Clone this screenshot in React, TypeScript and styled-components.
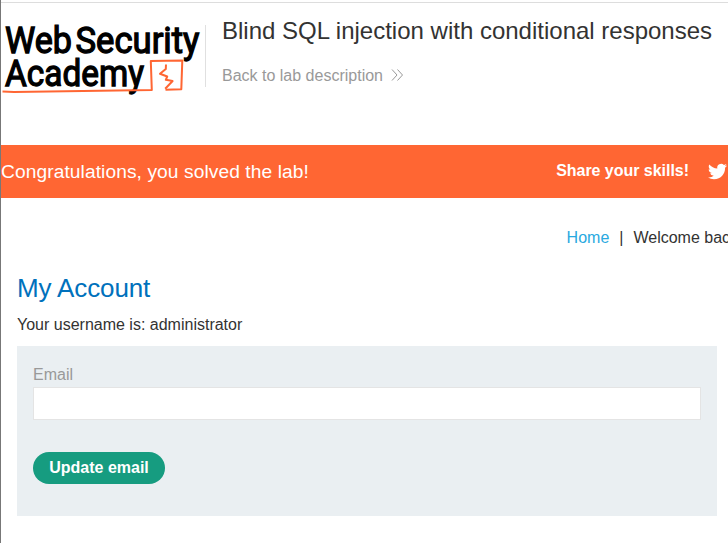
import React from "react";
import styled, { createGlobalStyle } from "styled-components";

const GlobalStyle = createGlobalStyle`
  *, *::before, *::after { box-sizing: border-box; }
  html, body { margin: 0; overflow: hidden; background: #fff; }
  body { font-family: "Liberation Sans", Arial, sans-serif; font-size: 16px; color: #333332; }
`;

const Page = styled.div`
  width: 728px;
  height: 543px;
  border-left: 1px solid #777;
  overflow: hidden;
`;

const Header = styled.header`
  display: flex;
  height: 145px;
  padding-top: 2px;
  background: linear-gradient(#ddd, #ddd) 0 2px / 100% 1px no-repeat;
`;

const Logo = styled.svg`
  display: block;
  flex: none;
  width: 204px;
  height: 100px;
  font-family: Roboto, sans-serif;
  font-weight: 400;
`;

const Heading = styled.div`
  margin-top: 23px;
  height: 62px;
  padding-left: 16px;
  border-left: 1px solid #e0e0e0;
  white-space: nowrap;
`;

const Title = styled.h2`
  margin: -9px 0 0;
  font-size: 24px;
  font-weight: 400;
  line-height: 29px;
`;

const BackLink = styled.a`
  display: flex;
  align-items: center;
  gap: 8px;
  margin-top: 21px;
  line-height: 20px;
  color: #999;

  svg { margin-top: -2px; }
`;

const Banner = styled.section`
  display: flex;
  align-items: center;
  justify-content: space-between;
  height: 53px;
  background: #ff6633;
  color: #fff;
  white-space: nowrap;
`;

const Message = styled.h4`
  margin: 0;
  font-size: 19.2px;
  font-weight: 400;
  letter-spacing: 0.08px;
  line-height: 22px;
`;

const Share = styled.div`
  display: flex;
  align-items: center;
  gap: 19px;
  margin-bottom: 2px;
  padding-right: 1px;
  font-weight: 700;
  letter-spacing: -0.03px;
  line-height: 20px;

  svg { margin-top: 2px; }
`;

const Nav = styled.nav`
  display: flex;
  height: 20px;
  margin: 30px 0 0 565.6px;
  line-height: 20px;
  white-space: nowrap;
`;

const HomeLink = styled.a`
  color: #29a9e0;
`;

const Divider = styled.span`
  margin: 0 10px;
`;

const Account = styled.main`
  padding: 25px 11px 0 16px;
`;

const AccountTitle = styled.h1`
  margin: 0;
  font-size: 26px;
  font-weight: 400;
  letter-spacing: -0.12px;
  line-height: 30px;
  color: #0071bc;
`;

const Username = styled.p`
  margin: 12px 0 11px;
  line-height: 20px;
`;

const Form = styled.form`
  height: 170px;
  padding: 19px 16px 0;
  background: #eaeff2;
`;

const Label = styled.label`
  display: block;
  line-height: 20px;
  height: 22px;
  color: #999;
`;

const Input = styled.input`
  display: block;
  width: 100%;
  height: 33px;
  padding: 0 8px;
  border: 1px solid #e4e4e4;
  background: #fff;
  font: inherit;
  outline: none;
`;

const Submit = styled.button`
  display: block;
  width: 132px;
  height: 32px;
  margin-top: 32px;
  padding: 0 0 1px;
  border: 0;
  border-radius: 16px;
  background: #169c80;
  color: #fff;
  font: 700 16px "Liberation Sans", Arial, sans-serif;
`;

const AcademyLogo = () => (
  <Logo viewBox="1 2 204 100" role="img" aria-label="Web Security Academy">
    <g fill="#000" stroke="#000" strokeWidth="1.3" fontSize="36.5">
      <text x="5" y="53" textLength="67" lengthAdjust="spacingAndGlyphs">Web</text>
      <text x="75.5" y="53" textLength="124" lengthAdjust="spacingAndGlyphs">Security</text>
      <text x="5" y="86" textLength="139" lengthAdjust="spacingAndGlyphs">Academy</text>
    </g>
    <g fill="none" stroke="#ff6633" strokeWidth="2" strokeLinejoin="round">
      <path d="M2.5 91.4 L14 92 L100 90.8 L151.8 90 L150.8 61 L182.3 60.4 L181.3 89.2 L165.5 89.7" />
      <path d="M166 64.5 L165.8 69 L160 73.8 L167.2 76.5 L165.8 79.8 L172.6 81 L165.2 88.8" />
    </g>
  </Logo>
);

const Chevrons = () => (
  <svg width="13" height="12" viewBox="0 0 13 12" fill="none" stroke="#999" strokeWidth="1">
    <path d="M1 .5 6 6 1 11.5M6.5 .5 11.5 6 6.5 11.5" />
  </svg>
);

const Twitter = () => (
  <svg width="19" height="19" viewBox="0 0 24 24" fill="#fff">
    <path d="M23.95 4.57a10 10 0 0 1-2.82.78 4.96 4.96 0 0 0 2.16-2.73c-.95.56-2 .96-3.13 1.19a4.92 4.92 0 0 0-8.38 4.48C7.69 8.1 4.07 6.13 1.64 3.16a4.82 4.82 0 0 0-.67 2.48c0 1.71.87 3.21 2.19 4.1a4.9 4.9 0 0 1-2.23-.62v.06a4.92 4.92 0 0 0 3.95 4.83 5 5 0 0 1-2.21.08 4.94 4.94 0 0 0 4.6 3.42A9.87 9.87 0 0 1 0 19.54a13.99 13.99 0 0 0 7.56 2.21c9.05 0 14-7.5 14-13.98 0-.21 0-.42-.02-.63a9.94 9.94 0 0 0 2.46-2.55z" />
  </svg>
);

export default function App() {
  return (
    <Page>
      <GlobalStyle />
      <Header>
        <AcademyLogo />
        <Heading>
          <Title>Blind SQL injection with conditional responses</Title>
          <BackLink>
            Back to lab description
            <Chevrons />
          </BackLink>
        </Heading>
      </Header>
      <Banner>
        <Message>Congratulations, you solved the lab!</Message>
        <Share>
          Share your skills!
          <Twitter />
        </Share>
      </Banner>
      <Nav>
        <HomeLink>Home</HomeLink>
        <Divider>|</Divider>
        <span>Welcome back!</span>
      </Nav>
      <Account>
        <AccountTitle>My Account</AccountTitle>
        <Username>Your username is: administrator</Username>
        <Form onSubmit={(e) => e.preventDefault()}>
          <Label htmlFor="email">Email</Label>
          <Input id="email" type="email" />
          <Submit type="submit">Update email</Submit>
        </Form>
      </Account>
    </Page>
  );
}
